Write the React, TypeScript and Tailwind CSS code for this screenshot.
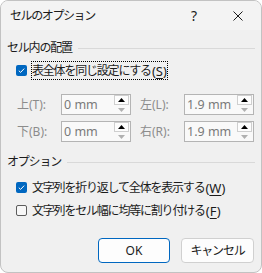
import React from 'react';

const font = '"Noto Sans", "Noto Sans CJK JP", sans-serif';

const Check = ({ checked }: { checked: boolean }) =>
  checked ? (
    <span className="flex h-[11px] w-[11px] items-center justify-center rounded-[2px] bg-[#0067c0]">
      <svg width="9" height="9" viewBox="0 0 9 9">
        <path d="M1.8 4.7 L3.6 6.4 L7.2 2.6" fill="none" stroke="#fff" strokeWidth="1" />
      </svg>
    </span>
  ) : (
    <span className="h-[11px] w-[11px] rounded-[2px] border border-[#5c5c5c] bg-[#f7f7f7]" />
  );

const Heading = ({ text }: { text: string }) => (
  <div className="flex h-[16px] items-center">
    <span className="text-[12px] leading-[16px] tracking-[-1.2px] text-[#1b1b1b]">{text}</span>
    <div className="ml-[6px] h-px flex-1 bg-[#d9d9d9]" />
  </div>
);

const Spin = ({ label, value }: { label: string; value: string }) => (
  <div className="flex items-center">
    <span className="w-[44px] text-[12px] leading-[16px] text-[#8c8c8c]">{label}</span>
    <div className="flex h-[21px] w-[70px] items-center border border-[#b4b4b4] bg-[#f9f9f9]">
      <span className="flex-1 pl-[2px] text-[12.5px] leading-[16px] text-[#7a7a7a]">{value}</span>
      <div className="mr-[1px] flex h-[19px] w-[15px] flex-col">
        <div className="flex h-[10px] items-center justify-center border border-[#cfcfcf] bg-[#fdfdfd]">
          <svg width="7" height="4" viewBox="0 0 7 4">
            <path d="M0 4 L3.5 0 L7 4 Z" fill="#000" />
          </svg>
        </div>
        <div className="flex h-[9px] items-center justify-center">
          <svg width="7" height="4" viewBox="0 0 7 4">
            <path d="M0 0 L3.5 4 L7 0 Z" fill="#b0b0b0" />
          </svg>
        </div>
      </div>
    </div>
  </div>
);

const CheckRow = ({
  checked,
  text,
  keyChar,
  focus,
}: {
  checked: boolean;
  text: string;
  keyChar: string;
  focus?: boolean;
}) => (
  <div className="flex h-[19px] items-center pl-[9px]">
    <Check checked={checked} />
    <span
      className={
        'ml-[4px] flex h-[19px] items-center px-[1px] text-[12px] leading-[16px] text-[#1b1b1b] ' +
        (focus ? 'outline outline-1 outline-dotted outline-[#000] -outline-offset-1' : '')
      }
    >
      <span className="tracking-[-1.2px]">{text}</span>
      <span className="ml-[1px] text-[13px]">
        (<span className="underline underline-offset-2">{keyChar}</span>)
      </span>
    </span>
  </div>
);

export default function App() {
  return (
    <div
      className="flex h-[273px] w-[262px] flex-col overflow-hidden rounded-[8px] border border-[#c2c2c2] bg-[#f0f0f0]"
      style={{ fontFamily: font }}
    >
      <div className="flex h-[29px] items-center bg-[#f3f3f3]">
        <span className="ml-[9px] flex-1 text-[12px] leading-[16px] tracking-[-1.4px] text-[#1b1b1b]">
          セルのオプション
        </span>
        <span className="w-[16px] text-center text-[14px] leading-[16px] text-[#1b1b1b]">?</span>
        <span className="ml-[30px] mr-[17px] flex w-[12px] justify-center">
          <svg width="10" height="10" viewBox="0 0 10 10">
            <path d="M0.5 0.5 L9.5 9.5 M9.5 0.5 L0.5 9.5" stroke="#1b1b1b" strokeWidth="1" />
          </svg>
        </span>
      </div>

      <div className="flex flex-1 flex-col px-[6px]">
        <div className="mt-[10px]">
          <Heading text="セル内の配置" />
        </div>
        <div className="mt-[5px]">
          <CheckRow checked text="表全体を同じ設定にする" keyChar="S" focus />
        </div>
        <div className="mt-[14px] flex gap-[9px] pl-[10px]">
          <Spin label="上(T):" value="0 mm" />
          <Spin label="左(L):" value="1.9 mm" />
        </div>
        <div className="mt-[6px] flex gap-[9px] pl-[10px]">
          <Spin label="下(B):" value="0 mm" />
          <Spin label="右(R):" value="1.9 mm" />
        </div>
        <div className="mt-[12px]">
          <Heading text="オプション" />
        </div>
        <div className="mt-[8px]">
          <CheckRow checked text="文字列を折り返して全体を表示する" keyChar="W" />
        </div>
        <div className="mt-[4px]">
          <CheckRow checked={false} text="文字列をセル幅に均等に割り付ける" keyChar="F" />
        </div>
        <div className="mt-[18px] flex justify-end gap-[11px] pr-[1px]">
          <button className="h-[25px] w-[72px] rounded-[4px] border border-[#0067c0] bg-[#fdfdfd] text-[12px] text-[#1b1b1b]">
            OK
          </button>
          <button className="h-[25px] w-[73px] rounded-[4px] border border-[#d0d0d0] bg-[#fdfdfd] text-[12px] tracking-[-1.2px] text-[#1b1b1b]">
            キャンセル
          </button>
        </div>
      </div>
    </div>
  );
}
